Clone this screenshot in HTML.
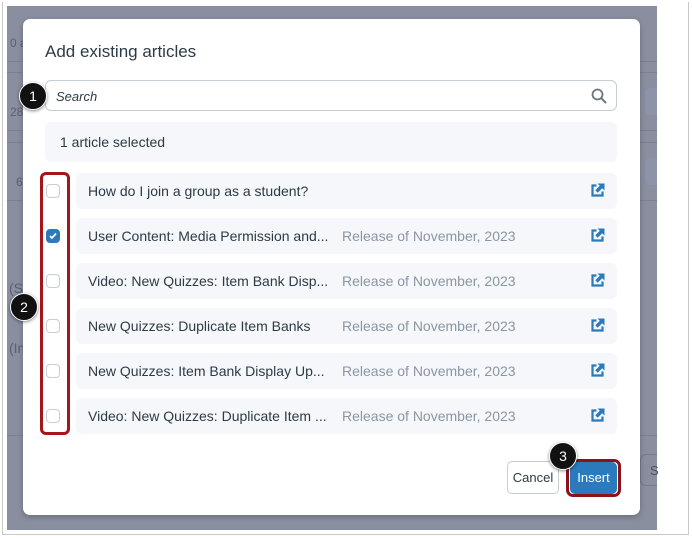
<!DOCTYPE html>
<html><head><style>
*{box-sizing:border-box;margin:0;padding:0}
body{width:692px;height:538px;background:#fff;font-family:"Liberation Sans",sans-serif;position:relative;overflow:hidden}
.frame{position:absolute;left:2px;top:2px;width:687px;height:533px;border:1px solid #c8c8c8;border-top:none}
.ov{position:absolute;left:7px;top:6px;width:650px;height:524px;background:#8a8fa0}
.bgt{position:absolute;color:#5b6070;font-size:12px}
.line{position:absolute;left:7px;width:650px;height:1px;background:#7c8192}
.modal{position:absolute;left:23px;top:19px;width:617px;height:496px;background:#fff;border-radius:7px;box-shadow:0 2px 6px rgba(0,0,0,.25)}
.title{position:absolute;left:45px;top:42px;font-size:17px;color:#2d3b45}
.search{position:absolute;left:45px;top:80px;width:572px;height:31px;border:1px solid #c7cdd1;border-radius:6px;font-style:italic;font-size:13px;color:#2d3b45;padding:8px 10px}
.sel{position:absolute;left:45px;top:122px;width:572px;height:40px;background:#f5f7fa;border-radius:6px;font-size:14px;color:#2d3b45;padding:12px 15px}
.row{position:absolute;left:76px;width:541px;height:36px;background:#f5f7fa;border-radius:6px;font-size:14px;color:#2d3b45}
.row .t{position:absolute;left:12px;top:10px}
.row .r{position:absolute;left:266px;top:10px;color:#8b96a2}
.row svg{position:absolute;left:514px;top:10px}
.cb{position:absolute;left:46px;width:14px;height:14px;border:1px solid #c7cdd1;border-radius:4px;background:#fff}
.cb.on{background:#2b7abc;border-color:#2b7abc}
.red{position:absolute;left:40px;top:172px;width:30px;height:263px;border:3px solid #a5151a;border-radius:6px}
.call{position:absolute;width:28px;height:28px;border-radius:50%;background:#111;color:#fff;font-size:14px;text-align:center;line-height:26px;border:1px solid #fff;box-shadow:0 1px 3px rgba(0,0,0,.5)}
.btn{position:absolute;font-size:13px;border-radius:5px;text-align:center}
</style></head><body>
<div class="frame"></div>
<div class="ov"></div>
<div class="bgt" style="left:10px;top:36px">0 a</div>
<div class="bgt" style="left:10px;top:105px">28</div>
<div class="bgt" style="left:16px;top:175px">6</div>
<div class="bgt" style="left:9px;top:280px;font-size:14px">(St</div>
<div class="bgt" style="left:9px;top:340px;font-size:14px">(In</div>
<div class="line" style="top:61px"></div>
<div class="line" style="top:72px"></div>
<div class="line" style="top:130px"></div>
<div class="line" style="top:142px"></div>
<div class="line" style="top:200px"></div>
<div class="line" style="top:435px"></div>
<div style="position:absolute;left:645px;top:88px;width:12px;height:27px;background:#8d93a8;border-radius:6px 0 0 6px"></div>
<div style="position:absolute;left:645px;top:158px;width:12px;height:27px;background:#8d93a8;border-radius:6px 0 0 6px"></div>
<div style="position:absolute;left:640px;top:454px;width:17px;height:32px;border:1px solid #777c8c;border-right:none;border-radius:6px 0 0 6px;color:#4b5060;font-size:13px;padding:8px 0 0 9px">S</div>
<div class="modal"></div>
<div class="title">Add existing articles</div>
<div class="search">Search
<svg style="position:absolute;right:9px;top:7px" width="16" height="16" viewBox="0 0 16 16"><circle cx="6.5" cy="6.5" r="5" fill="none" stroke="#6b7780" stroke-width="1.8"/><path d="M10.2 10.2L14.5 14.5" stroke="#6b7780" stroke-width="2" stroke-linecap="round"/></svg></div>
<div class="sel">1 article selected</div>

<div class="row" style="top:173px"><span class="t">How do I join a group as a student?</span><svg width="15" height="15" viewBox="0 0 15 15"><path d="M6.5 2.5H2.5v10h10V8.5" fill="none" stroke="#2b7abc" stroke-width="2.2"/><path d="M7.5 0.5h7v7l-2.3-2.3-4.5 4.5-2.4-2.4 4.5-4.5z" fill="#2b7abc"/></svg></div>
<div class="row" style="top:218px"><span class="t">User Content: Media Permission and...</span><span class="r">Release of November, 2023</span><svg width="15" height="15" viewBox="0 0 15 15"><path d="M6.5 2.5H2.5v10h10V8.5" fill="none" stroke="#2b7abc" stroke-width="2.2"/><path d="M7.5 0.5h7v7l-2.3-2.3-4.5 4.5-2.4-2.4 4.5-4.5z" fill="#2b7abc"/></svg></div>
<div class="row" style="top:263px"><span class="t">Video: New Quizzes: Item Bank Disp...</span><span class="r">Release of November, 2023</span><svg width="15" height="15" viewBox="0 0 15 15"><path d="M6.5 2.5H2.5v10h10V8.5" fill="none" stroke="#2b7abc" stroke-width="2.2"/><path d="M7.5 0.5h7v7l-2.3-2.3-4.5 4.5-2.4-2.4 4.5-4.5z" fill="#2b7abc"/></svg></div>
<div class="row" style="top:308px"><span class="t">New Quizzes: Duplicate Item Banks</span><span class="r">Release of November, 2023</span><svg width="15" height="15" viewBox="0 0 15 15"><path d="M6.5 2.5H2.5v10h10V8.5" fill="none" stroke="#2b7abc" stroke-width="2.2"/><path d="M7.5 0.5h7v7l-2.3-2.3-4.5 4.5-2.4-2.4 4.5-4.5z" fill="#2b7abc"/></svg></div>
<div class="row" style="top:353px"><span class="t">New Quizzes: Item Bank Display Up...</span><span class="r">Release of November, 2023</span><svg width="15" height="15" viewBox="0 0 15 15"><path d="M6.5 2.5H2.5v10h10V8.5" fill="none" stroke="#2b7abc" stroke-width="2.2"/><path d="M7.5 0.5h7v7l-2.3-2.3-4.5 4.5-2.4-2.4 4.5-4.5z" fill="#2b7abc"/></svg></div>
<div class="row" style="top:398px"><span class="t">Video: New Quizzes: Duplicate Item ...</span><span class="r">Release of November, 2023</span><svg width="15" height="15" viewBox="0 0 15 15"><path d="M6.5 2.5H2.5v10h10V8.5" fill="none" stroke="#2b7abc" stroke-width="2.2"/><path d="M7.5 0.5h7v7l-2.3-2.3-4.5 4.5-2.4-2.4 4.5-4.5z" fill="#2b7abc"/></svg></div>

<div class="cb" style="top:184px"></div>
<div class="cb on" style="top:229px"><svg width="12" height="12" viewBox="0 0 12 12" style="position:absolute;left:0;top:0"><path d="M3 6l2 2 4-4.5" fill="none" stroke="#fff" stroke-width="1.8"/></svg></div>
<div class="cb" style="top:274px"></div>
<div class="cb" style="top:319px"></div>
<div class="cb" style="top:364px"></div>
<div class="cb" style="top:409px"></div>
<div class="red"></div>

<div class="btn" style="left:507px;top:461px;width:52px;height:33px;border:1px solid #c7cdd1;color:#2d3b45;background:#fff;line-height:31px">Cancel</div>
<div style="position:absolute;left:566px;top:459px;width:55px;height:38px;border:3px solid #8a1318;border-radius:7px"></div>
<div class="btn" style="left:570px;top:462px;width:47px;height:32px;background:#2b7abc;color:#fff;line-height:32px">Insert</div>

<div class="call" style="left:19px;top:82px">1</div>
<div class="call" style="left:10px;top:293px">2</div>
<div class="call" style="left:549px;top:442px">3</div>
</body></html>
